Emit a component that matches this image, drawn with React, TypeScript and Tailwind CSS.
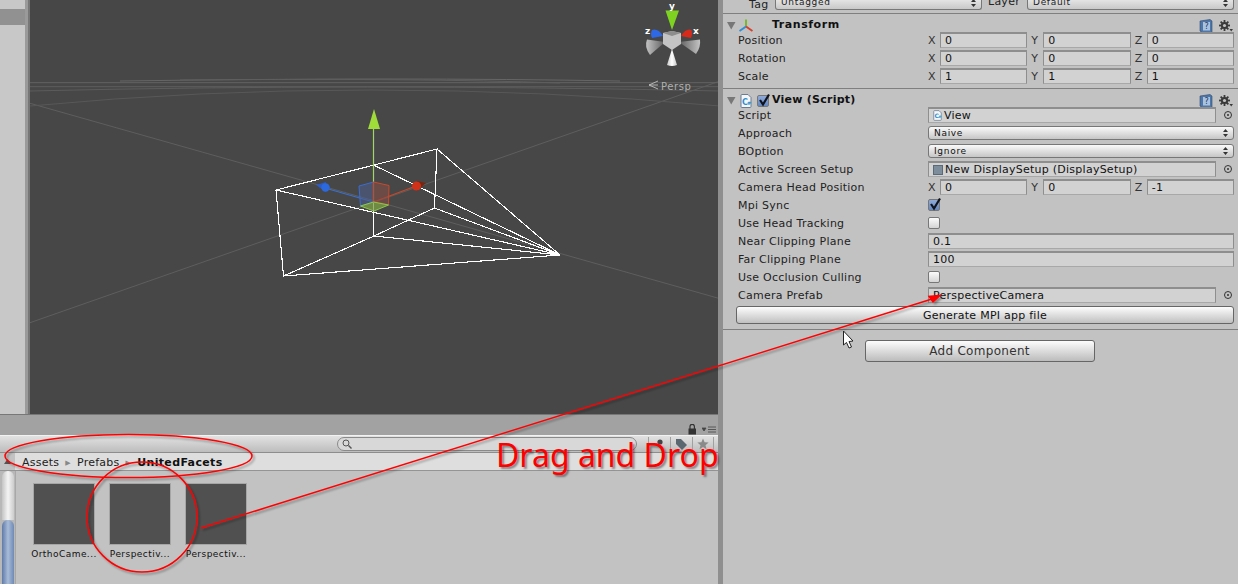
const font = { fontFamily: '"DejaVu Sans", sans-serif' };

function Row({ label, children }: { label: string; children?: React.ReactNode }) {
  return (
    <div className="flex h-[18px] items-center pl-[15px] pr-1">
      <div className="w-[190px] shrink-0 pt-[2px] text-[11px] tracking-[0.25px] text-[#222]">{label}</div>
      <div className="flex min-w-0 flex-1 items-center">{children}</div>
    </div>
  );
}

function Field({ value, icon }: { value: string; icon?: React.ReactNode }) {
  return (
    <div className="flex h-4 min-w-0 flex-1 items-center gap-[2px] border border-t-2 border-[#8e8e8e] border-b-[#a8a8a8] bg-[#d2d2d2] pl-1 text-[11px] tracking-[0.25px] text-[#111]">
      {icon}
      <span className="pt-[1px]">{value}</span>
    </div>
  );
}

function Vec({ x, y, z }: { x: string; y: string; z: string }) {
  return (
    <div className="flex w-full items-center gap-[4px]">
      {[["X", x], ["Y", y], ["Z", z]].map(([l, v]) => (
        <div key={l} className="flex min-w-0 flex-1 items-center">
          <span className="w-3 shrink-0 pt-[2px] text-[11px] text-[#333]">{l}</span>
          <Field value={v} />
        </div>
      ))}
    </div>
  );
}

function Target() {
  return (
    <div className="flex w-[18px] shrink-0 justify-end pr-px">
      <svg width="10" height="10" viewBox="0 0 10 10">
        <circle cx="5" cy="5" r="3.5" fill="none" stroke="#333" />
        <circle cx="5" cy="5" r="1" fill="#333" />
      </svg>
    </div>
  );
}

function Updown() {
  return (
    <svg width="5" height="8" viewBox="0 0 5 8" className="shrink-0">
      <path d="M2.5 0 L5 3 H0 Z M0 5 H5 L2.5 8 Z" fill="#333" />
    </svg>
  );
}

function Select({ value }: { value: string }) {
  return (
    <div className="flex h-[14px] flex-1 items-center justify-between rounded-[3px] border border-[#777] bg-gradient-to-b from-[#fafafa] to-[#c6c6c6] pl-[5px] pr-[5px] text-[9px] tracking-[0.7px] text-[#111]">
      <span className="pt-[2px]">{value}</span>
      <Updown />
    </div>
  );
}

function Check({ on }: { on?: boolean }) {
  return (
    <div
      className={
        "relative h-[12px] w-[12px] rounded-[2px] border border-[#777] " +
        (on ? "bg-gradient-to-b from-[#8eaad8] to-[#6487c0]" : "bg-gradient-to-b from-[#fbfbfb] to-[#d4d4d4]")
      }
    >
      {on && (
        <svg className="absolute -top-[3px] left-0" width="13" height="14" viewBox="0 0 13 14">
          <path d="M2 7 L5 11.5 L11 1.5" fill="none" stroke="#10131c" strokeWidth="2.2" />
        </svg>
      )}
    </div>
  );
}

function Tri() {
  return (
    <svg width="9" height="9" viewBox="0 0 9 9" className="shrink-0">
      <path d="M0 1 H8.5 L4.2 8.5 Z" fill="#777" />
    </svg>
  );
}

function HeaderIcons() {
  return (
    <div className="ml-auto flex items-center gap-[6px] pr-px">
      <svg width="14" height="14" viewBox="0 0 14 14">
        <path d="M1 2 L11 0.5 L13 2 V13.5 L3 13.5 L1 12 Z" fill="#4f77a8" stroke="#2d4a70" strokeWidth="0.6" />
        <rect x="4" y="3" width="7" height="8.5" fill="#a8c2df" />
        <text x="5.5" y="10.3" fontSize="8" fontFamily="DejaVu Sans" fill="#1d3a60">?</text>
      </svg>
      <svg width="14" height="12" viewBox="0 0 14 12">
        <g fill="#3a3a3a">
          <circle cx="5.5" cy="5.5" r="3.6" />
          <rect x="4.6" y="0" width="1.8" height="11" />
          <rect x="0" y="4.6" width="11" height="1.8" />
          <rect x="4.6" y="0" width="1.8" height="11" transform="rotate(45 5.5 5.5)" />
          <rect x="4.6" y="0" width="1.8" height="11" transform="rotate(-45 5.5 5.5)" />
          <path d="M10.5 9 H14 L12.2 11.5 Z" />
        </g>
        <circle cx="5.5" cy="5.5" r="1.6" fill="#c2c2c2" />
      </svg>
    </div>
  );
}

function ScriptIcon({ size = 11 }: { size?: number }) {
  return (
    <svg width={size} height={size + 2} viewBox="0 0 12 14" className="shrink-0">
      <path d="M1 1.5 Q1 0.5 2 0.5 H8 L11 3.5 V12.5 Q11 13.5 10 13.5 H2 Q1 13.5 1 12.5 Z" fill="#f4f6f8" stroke="#6a7c92" />
      <text x="2" y="10.5" fontSize="8" fontWeight="700" fontFamily="DejaVu Sans" fill="#2d8fd0">C</text>
      <text x="7" y="10.5" fontSize="5" fontWeight="700" fontFamily="DejaVu Sans" fill="#2d8fd0">#</text>
    </svg>
  );
}

function Thumb({ label }: { label: string }) {
  return (
    <div className="flex w-[62px] flex-col items-center">
      <div className="h-[62px] w-[62px] border border-[#a6a6a6] bg-[#505050]" />
      <div className="mt-[2px] w-[70px] text-center text-[9px] leading-[14px] tracking-[0.45px] text-[#111]">{label}</div>
    </div>
  );
}

function SceneDrawing() {
  const apex = "560,255";
  return (
    <svg className="absolute inset-0" width="688" height="414" viewBox="30 0 688 414">
      <defs>
        <linearGradient id="coneL" x1="0" x2="1" y1="0" y2="0">
          <stop offset="0" stopColor="#c4c4c4" />
          <stop offset="1" stopColor="#5e5e5e" />
        </linearGradient>
        <linearGradient id="coneR" x1="1" x2="0" y1="0" y2="0">
          <stop offset="0" stopColor="#c4c4c4" />
          <stop offset="1" stopColor="#5e5e5e" />
        </linearGradient>
        <linearGradient id="coneB" x1="0" x2="1" y1="0" y2="0">
          <stop offset="0" stopColor="#c8c8c8" />
          <stop offset="0.5" stopColor="#ffffff" />
          <stop offset="1" stopColor="#c8c8c8" />
        </linearGradient>
      </defs>
      <g stroke="#5e5e5e" fill="none" strokeWidth="1">
        <path d="M30 322.7 L720 81" />
        <path d="M30 103.3 L720 298.7" />
        <path d="M30 82.7 H720" stroke="#636363" />
        <path d="M30 86.7 H720" stroke="#5e5e5e" />
        <path d="M30 91 Q360 83 720 91" stroke="#5c5c5c" />
        <path d="M30 106 Q367 74 720 106" stroke="#585858" />
        <path d="M120 81 Q400 77 620 81" stroke="#666" />
        <path d="M180 80 Q420 78 560 83" stroke="#5e5e5e" />
      </g>
      <g stroke="#fff" fill="none" strokeWidth="1.1" shapeRendering="crispEdges">
        <path d="M276 190 L437 149 L434.5 208 L374 236 L283.5 276 Z" />
        <path d="M373.5 165 V236" />
        <path d={`M276 190 L${apex} M437 149 L${apex} M434.5 208 L${apex} M374 236 L${apex} M283.5 276 L${apex} M373.5 165 L${apex}`} />
      </g>
      <path d="M373.5 129 V203" stroke="#a4d46a" strokeWidth="1.2" />
      <path d="M374 109 L368 129 H380 Z" fill="#9fdc3a" />
      <path d="M373.5 202 L325 188" stroke="#3a6fd0" strokeWidth="1.2" />
      <path d="M373.5 202 L416 186" stroke="#c8472a" strokeWidth="1.2" />
      <path d="M316 185 L326 182 L326 192 Z" fill="#2a5bc8" />
      <circle cx="325.5" cy="187.5" r="4.2" fill="#2d69de" />
      <path d="M426 183 L417 181 L417 191 Z" fill="#7a2410" />
      <circle cx="416.5" cy="186" r="4.5" fill="#cf3218" />
      <path d="M359 186 L373.5 182 V202 L360.5 206 Z" fill="#4c5e90" fillOpacity="0.55" stroke="#3b6cd2" />
      <path d="M373.5 182 L389 185.5 L388.5 205 L373.5 202 Z" fill="#8b4c44" fillOpacity="0.55" stroke="#c84a2c" />
      <path d="M360.5 206 L373.5 202 L388.5 205 L374 211 Z" fill="#7ba044" fillOpacity="0.75" stroke="#8cc84a" />
      <g>
        <path d="M665.5 10.5 H679 L672 30 Z" fill="#7ed321" />
        <path d="M652 30 Q658 28 663 36 L652 38 Q650 34 652 30 Z" fill="#2f68e4" />
        <path d="M691.5 30 Q686 28 681 36 L691 38 Q693 34 691.5 30 Z" fill="#d82a1a" />
        <path d="M665 42 L647 39.5 Q644 47 650 55 Z" fill="url(#coneL)" />
        <path d="M679 42 L700 39.5 Q701 47 696 54 Z" fill="url(#coneR)" />
        <path d="M663 33 L672 31 L681 33 V44 L672 50 L663 44 Z" fill="#c4c4c4" />
        <path d="M663 33 L672 31 L681 33 L672 36 Z" fill="#8d8d8d" />
        <path d="M672 49 L667 65 Q672 67 677 65 Z" fill="url(#coneB)" />
        <path d="M658 81 L649 85 L658 89 M649 85 H658" fill="none" stroke="#c0c0c0" strokeWidth="0.9" />
      </g>
    </svg>
  );
}

export default function App() {
  return (
    <div className="relative flex h-[584px] w-[1238px] overflow-hidden bg-[#c2c2c2]" style={font}>
      <div className="flex h-full w-[720px] shrink-0 flex-col border-r-2 border-[#8f8f8f]">
        <div className="flex h-[414px] shrink-0">
          <div className="w-[25px] shrink-0 bg-[#c8c8c8] pt-[9px]">
            <div className="h-4 bg-[#919191]" />
          </div>
          <div className="w-[5px] shrink-0 border-r-2 border-[#777] bg-[#9a9a9a]" />
          <div className="relative flex-1 bg-[#474747]">
            <SceneDrawing />
            <div className="absolute left-[639px] top-[0px] text-[9px] font-bold text-white">y</div>
            <div className="absolute left-[615px] top-[25px] text-[9px] font-bold text-white">z</div>
            <div className="absolute left-[663px] top-[25px] text-[9px] font-bold text-white">x</div>
            <div className="absolute left-[631px] top-[79px] text-[10px] tracking-[0.6px] text-[#b0b0b0]">Persp</div>
          </div>
        </div>
        <div className="relative h-[21px] shrink-0 border-t border-[#777] bg-[#a2a2a2]">
          <div className="absolute right-[1px] top-[9px] flex items-center gap-[3px]">
            <svg width="9" height="11" viewBox="0 0 9 11">
              <rect x="0.5" y="4.5" width="7.5" height="6" fill="#333" />
              <path d="M2 5 V2.5 a2.2 2.2 0 0 1 4.4 0 V5" fill="none" stroke="#333" strokeWidth="1.2" />
            </svg>
            <svg width="15" height="7" viewBox="0 0 15 7" className="ml-[2px]">
              <path d="M0 2 H4 L2 5 Z M6 1 H14 M6 3.5 H14 M6 6 H14" fill="#444" stroke="#444" strokeWidth="0.8" />
            </svg>
          </div>
        </div>
        <div className="flex h-[18px] shrink-0 items-center border-t border-b border-t-[#f2f2f2] border-b-[#8d8d8d] bg-gradient-to-b from-[#e2e2e2] to-[#bdbdbd] pl-[337px]">
          <div className="flex h-[14px] w-[300px] items-center rounded-full border border-[#8a8a8a] bg-[#d8d8d8] pl-1">
            <svg width="10" height="10" viewBox="0 0 10 10">
              <circle cx="4" cy="4" r="3" fill="none" stroke="#555" />
              <path d="M6.5 6.5 L9.5 9.5" stroke="#555" strokeWidth="1.4" />
            </svg>
          </div>
          <div className="ml-[11px] flex h-[14px] items-center">
            <div className="flex h-[15px] w-[22px] items-center justify-center border-l border-[#a0a0a0]">
              <svg width="10" height="10" viewBox="0 0 10 10"><circle cx="5" cy="3" r="2.6" fill="#444" /></svg>
            </div>
            <div className="flex h-[15px] w-[22px] items-center justify-center border-l border-[#a0a0a0]">
              <svg width="13" height="13" viewBox="0 0 13 13"><path d="M1 1 H6 L12 7 L7 12 L1 6 Z" fill="#5a6670" /></svg>
            </div>
            <div className="flex h-[15px] w-[22px] items-center justify-center border-x border-[#a0a0a0]">
              <svg width="12" height="12" viewBox="0 0 12 12"><path d="M6 0.5 L7.6 4.3 L11.6 4.6 L8.5 7.2 L9.5 11.3 L6 9.1 L2.5 11.3 L3.5 7.2 L0.4 4.6 L4.4 4.3 Z" fill="#8a8a8a" /></svg>
            </div>
          </div>
        </div>
        <div className="flex h-[18px] shrink-0 items-stretch border-b border-[#949494] bg-[#dedede] text-[11px] tracking-[0.25px] text-[#222]">
          <div className="flex w-[15px] shrink-0 items-center justify-center bg-[#c2c2c2]">
            <svg width="7" height="5" viewBox="0 0 7 5"><path d="M3.5 0 L7 5 H0 Z" fill="#555" /></svg>
          </div>
          <div className="flex items-center gap-[6px] pl-[7px] pt-[3px]">
            <span>Assets</span>
            <span className="text-[7px] text-[#888]">▶</span>
            <span>Prefabs</span>
            <span className="text-[7px] text-[#888]">▶</span>
            <span className="font-bold tracking-[0.35px] text-[#111]">UnitedFacets</span>
          </div>
        </div>
        <div className="flex min-h-0 flex-1">
          <div className="flex w-[16px] shrink-0 flex-col border-r border-[#a8a8a8] bg-[#b8b8b8] pl-[2px] pr-[1px]">
            <div className="h-[49px] rounded-t-full bg-gradient-to-r from-[#c4c4c4] via-[#f4f4f4] to-[#cccccc]" />
            <div className="flex-1 rounded-t-[8px] bg-gradient-to-r from-[#5f7ba8] via-[#a8bcd8] to-[#6f8ab5]" />
          </div>
          <div className="flex flex-1 gap-[14px] bg-[#c2c2c2] pl-[17px] pt-3">
            <Thumb label="OrthoCame..." />
            <Thumb label="Perspectiv..." />
            <Thumb label="Perspectiv..." />
          </div>
        </div>
      </div>

      <div className="flex h-full flex-1 flex-col border-l-[3px] border-[#8f8f8f] bg-[#c2c2c2]">
        <div className="flex h-[14px] shrink-0 items-end border-b border-[#7f7f7f] pb-[3px] pr-1 text-[11px] tracking-[0.25px] text-[#222]">
          <div className="relative w-[52px]">
            <span className="absolute left-[26px] -top-[13px]">Tag</span>
          </div>
          <div className="flex h-[14px] w-[207px] items-center justify-between rounded-b-[3px] border border-t-0 border-[#777] bg-gradient-to-b from-[#f0f0f0] to-[#c8c8c8] pl-[5px] pr-[5px] pt-px text-[9px] tracking-[0.7px]">
            <span>Untagged</span>
            <Updown />
          </div>
          <div className="w-[45px] pl-[6px]">Layer</div>
          <div className="flex h-[14px] flex-1 items-center justify-between rounded-b-[3px] border border-t-0 border-[#777] bg-gradient-to-b from-[#f0f0f0] to-[#c8c8c8] pl-[5px] pr-[5px] pt-px text-[9px] tracking-[0.7px]">
            <span>Default</span>
            <Updown />
          </div>
        </div>
        <div className="h-[75px] shrink-0 border-b border-[#7f7f7f]">
          <div className="flex h-[17px] items-center pl-[4px] pr-1 pt-[6px]">
            <Tri />
            <svg width="14" height="13" viewBox="0 0 14 13" className="ml-[3px]">
              <path d="M7 7.5 V0.5" stroke="#7ab92e" strokeWidth="2" />
              <path d="M7 7.5 L0.5 12" stroke="#2f8fd4" strokeWidth="2" />
              <path d="M7 7.5 L13.5 12" stroke="#d6402a" strokeWidth="2" />
            </svg>
            <span className="ml-[19px] text-[11px] font-bold tracking-[0.55px] text-[#111]">Transform</span>
            <HeaderIcons />
          </div>
          <Row label="Position"><Vec x="0" y="0" z="0" /></Row>
          <Row label="Rotation"><Vec x="0" y="0" z="0" /></Row>
          <Row label="Scale"><Vec x="1" y="1" z="1" /></Row>
        </div>
        <div className="h-[241px] shrink-0 border-b border-[#7f7f7f]">
          <div className="flex h-[17px] items-center pl-[4px] pr-1 pt-[6px]">
            <Tri />
            <span className="ml-[4px] flex"><ScriptIcon size={12} /></span>
            <span className="ml-[5px]"><Check on /></span>
            <span className="ml-[3px] text-[11px] font-bold tracking-[0.25px] text-[#111]">View (Script)</span>
            <HeaderIcons />
          </div>
          <Row label="Script">
            <Field value="View" icon={<ScriptIcon size={9} />} />
            <Target />
          </Row>
          <Row label="Approach"><Select value="Naive" /></Row>
          <Row label="BOption"><Select value="Ignore" /></Row>
          <Row label="Active Screen Setup">
            <Field
              value="New DisplaySetup (DisplaySetup)"
              icon={<div className="h-[10px] w-[10px] shrink-0 border border-[#5a6a78] bg-[#7d8d9c]" />}
            />
            <Target />
          </Row>
          <Row label="Camera Head Position"><Vec x="0" y="0" z="-1" /></Row>
          <Row label="Mpi Sync"><Check on /></Row>
          <Row label="Use Head Tracking"><Check /></Row>
          <Row label="Near Clipping Plane"><Field value="0.1" /></Row>
          <Row label="Far Clipping Plane"><Field value="100" /></Row>
          <Row label="Use Occlusion Culling"><Check /></Row>
          <Row label="Camera Prefab">
            <Field value="PerspectiveCamera" />
            <Target />
          </Row>
          <div className="mx-[13px] mt-[2px] mr-1 flex h-[18px] items-center justify-center rounded-[3px] border border-[#666] bg-gradient-to-b from-[#fdfdfd] to-[#c0c0c0] pt-[2px] text-[11px] tracking-[0.25px] text-[#111]">
            Generate MPI app file
          </div>
        </div>
        <div className="flex justify-center pr-[2px] pt-[10px]">
          <div className="flex h-[22px] w-[230px] items-center justify-center rounded-[3px] border border-[#666] bg-gradient-to-b from-[#fdfdfd] to-[#bcbcbc] text-[12px] tracking-[0.3px] text-[#333]">
            Add Component
          </div>
        </div>
      </div>

      <svg className="pointer-events-none absolute left-0 top-0" width="1238" height="584" viewBox="0 0 1238 584">
        <defs>
          <filter id="sh" x="-10%" y="-10%" width="120%" height="120%">
            <feDropShadow dx="2" dy="2" stdDeviation="1.2" floodColor="#000" floodOpacity="0.35" />
          </filter>
        </defs>
        <g filter="url(#sh)" fill="none" stroke="#ff0000" strokeWidth="1.5">
          <ellipse cx="128.5" cy="456" rx="123.5" ry="21.5" />
          <circle cx="142" cy="517" r="55" />
          <path d="M201 528 L932 299" />
          <path d="M940 295.5 L929 296.5 L933 302 Z" fill="#ff0000" />
        </g>
        <path d="M843.5 331 V345 L846.5 342.5 L849 348 L851.5 347 L849 341.5 L853 341 Z" fill="#fff" stroke="#222" strokeWidth="1" />
      </svg>
      <div
        className="absolute left-[496px] top-[436px] text-[32px] leading-[38px] text-[#ff0000] [text-shadow:2px_2px_2px_rgba(0,0,0,0.4)]"
        style={{ fontFamily: '"Noto Sans", sans-serif' }}
      >
        Drag and Drop
      </div>
    </div>
  );
}
